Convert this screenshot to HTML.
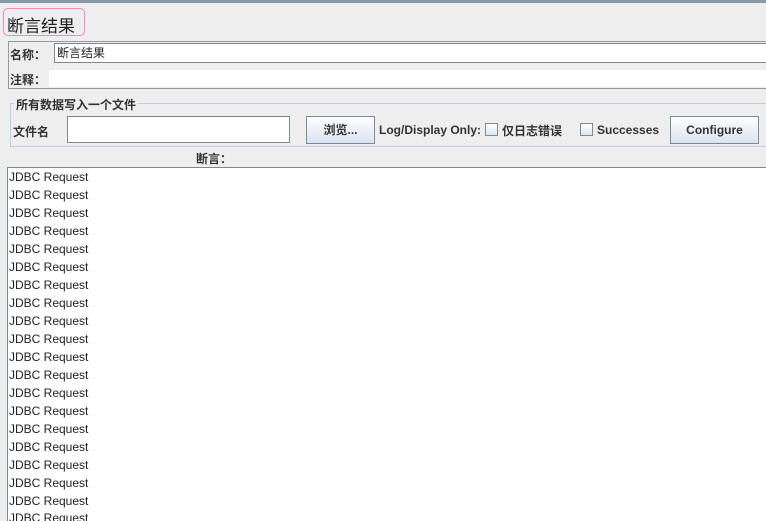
<!DOCTYPE html>
<html style="height:521px;overflow:hidden"><head><meta charset="utf-8"><style>
body{margin:0;width:766px;height:521px;background:#eeeeee;position:relative;overflow:hidden;font-family:"Liberation Sans","Noto Sans CJK SC",sans-serif;color:#333;}
.a{position:absolute;}
.b{font-weight:bold;font-size:12px;}
.btn{position:absolute;border:1px solid #7a8a99;background:linear-gradient(#fdfeff,#d9e3ef);font-weight:bold;font-size:12px;text-align:center;box-sizing:border-box;}
.cb{position:absolute;width:13px;height:13px;border:1px solid #7a8a99;background:linear-gradient(#fff,#dce4ee);box-sizing:border-box;}
.row{height:18px;line-height:18px;font-size:12px;color:#222;padding-left:1px;}
</style></head><body>
<div class="a" style="left:0;top:0;width:766px;height:3px;background:#8a99a6"></div>
<div class="a" style="left:3px;top:8px;width:82px;height:28px;border:1px solid #f28ac0;border-radius:5px;box-sizing:border-box"></div>
<div class="a" style="left:7px;top:12px;font-size:17px;color:#222">断言结果</div>
<div class="a" style="left:8px;top:41px;width:770px;height:48px;border:1px solid #999;box-sizing:border-box"></div>
<div class="a b" style="left:10px;top:46px">名称：</div>
<div class="a" style="left:54px;top:43px;width:720px;height:20px;background:#fff;border:1px solid #7a8a99;border-right:none;box-sizing:border-box;font-size:12px;line-height:18px;padding-left:2px;color:#222">断言结果</div>
<div class="a b" style="left:10px;top:71px">注释：</div>
<div class="a" style="left:49px;top:70px;width:720px;height:17px;background:#fff"></div>
<div class="a" style="left:10px;top:103px;width:770px;height:44px;border:1px solid #b8cfe5;box-sizing:border-box"></div>
<div class="a b" style="left:14px;top:96px;background:#eee;padding:0 2px">所有数据写入一个文件</div>
<div class="a b" style="left:13px;top:123px">文件名</div>
<div class="a" style="left:67px;top:116px;width:223px;height:27px;background:#fff;border:1px solid #7a8a99;box-sizing:border-box"></div>
<div class="btn" style="left:306px;top:116px;width:69px;height:28px;line-height:26px">浏览...</div>
<div class="a b" style="left:379px;top:123px">Log/Display Only:</div>
<div class="cb" style="left:485px;top:123px"></div>
<div class="a b" style="left:502px;top:122px">仅日志错误</div>
<div class="cb" style="left:580px;top:123px"></div>
<div class="a b" style="left:597px;top:123px">Successes</div>
<div class="btn" style="left:670px;top:116px;width:89px;height:28px;line-height:26px">Configure</div>
<div class="a b" style="left:196px;top:150px">断言：</div>
<div class="a" style="left:7px;top:167px;width:770px;height:360px;background:#fff;border:1px solid #7a8a99;box-sizing:border-box;padding-top:0">
<div class="row">JDBC Request</div><div class="row">JDBC Request</div><div class="row">JDBC Request</div><div class="row">JDBC Request</div><div class="row">JDBC Request</div><div class="row">JDBC Request</div><div class="row">JDBC Request</div><div class="row">JDBC Request</div><div class="row">JDBC Request</div><div class="row">JDBC Request</div><div class="row">JDBC Request</div><div class="row">JDBC Request</div><div class="row">JDBC Request</div><div class="row">JDBC Request</div><div class="row">JDBC Request</div><div class="row">JDBC Request</div><div class="row">JDBC Request</div><div class="row">JDBC Request</div><div class="row">JDBC Request</div><div class="row" style="margin-top:-1px">JDBC Request</div>
</div>
</body></html>
